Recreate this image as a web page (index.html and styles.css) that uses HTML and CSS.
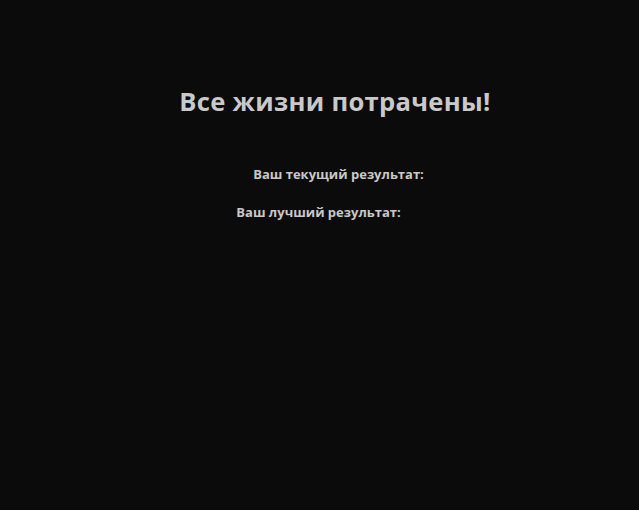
FILE: index.html
```html
<!DOCTYPE html>
<html lang="ru">
<head>
<meta charset="utf-8">
<link rel="stylesheet" href="styles.css">
</head>
<body>
<main class="screen">
  <h1 class="title">Все жизни потрачены!</h1>
  <p class="score score-current">Ваш текущий результат: <span class="value"></span></p>
  <p class="score score-best">Ваш лучший результат: <span class="value"></span></p>
</main>
</body>
</html>
```
FILE: styles.css
```css
html, body {
  margin: 0;
  height: 100%;
  background: #0b0b0b;
}
.screen {
  display: flex;
  flex-direction: column;
  align-items: center;
  padding-top: 84px;
  font-family: "Open Sans", "Noto Sans", sans-serif;
  font-weight: 700;
  color: #c9c9c9;
}
.title {
  margin: 0 0 0 31px;
  font-size: 25.6px;
  line-height: 36px;
  font-weight: 700;
  letter-spacing: 0.3px;
}
.score {
  margin: 0;
  font-size: 13px;
  line-height: 16px;
}
.score-current {
  margin-top: 46px;
  margin-left: 38px;
}
.score-best {
  margin-top: 22px;
  margin-left: -2px;
}
```
